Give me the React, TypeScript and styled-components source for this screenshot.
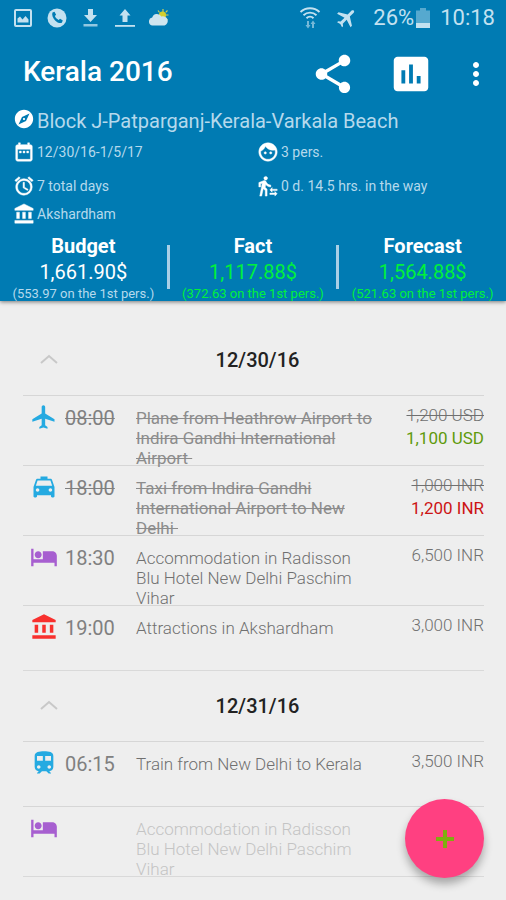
import React from 'react';
import styled, { createGlobalStyle, css } from 'styled-components';
import {
  MdAccessAlarm,
  MdAccountBalance,
  MdAssessment,
  MdDateRange,
  MdExplore,
  MdFace,
  MdFlight,
  MdHotel,
  MdLocalTaxi,
  MdMoreVert,
  MdShare,
  MdTrain,
  MdTransferWithinAStation,
} from 'react-icons/md';

const blue = '#007bb3';
const statusTint = '#c3e1f0';
const paleText = '#b5d9ec';
const green = '#00f03c';

const GlobalStyle = createGlobalStyle`
  * { box-sizing: border-box; }
  body {
    margin: 0;
    background: #eeeeee;
    font-family: Roboto, "Liberation Sans", sans-serif;
  }
  svg { display: block; flex: none; }
  h1, h2, h3, p, ul { margin: 0; padding: 0; }
`;

const Page = styled.div`
  min-height: 100vh;
  background: #eeeeee;
`;

const Header = styled.header`
  background: ${blue};
  box-shadow: 0 1px 4px rgba(0, 0, 0, 0.5);
`;

const StatusBar = styled.div`
  display: flex;
  align-items: center;
  justify-content: space-between;
  height: 36px;
  padding: 0 11px 0 13px;
  color: ${statusTint};
`;

const StatusNotices = styled.div`
  display: flex;
  align-items: center;
  gap: 14px;
`;

const StatusSystem = styled.div`
  display: flex;
  align-items: center;
  gap: 14px;
  font-size: 22px;
  line-height: 36px;
`;

const Charge = styled.span`
  display: flex;
  align-items: center;
  gap: 2px;
`;

const Battery = styled.span`
  display: flex;
  align-items: center;
  gap: 10px;
`;

const TiltedPlane = styled(MdFlight)`
  transform: rotate(45deg);
`;

const Toolbar = styled.div`
  display: flex;
  align-items: center;
  height: 72px;
  padding: 4px 12px 0 23px;
`;

const Title = styled.h1`
  flex: 1;
  color: #ffffff;
  font-size: 28px;
  font-weight: 500;
  line-height: 40px;
  padding-bottom: 4px;
`;

const ToolButton = styled.button`
  display: flex;
  padding: 0;
  border: 0;
  background: none;
  color: #ffffff;
  cursor: pointer;
`;

const Tools = styled.div`
  display: flex;
  align-items: center;
  gap: 24px;
`;

const ToolGroup = styled.div`
  display: flex;
  align-items: center;
  gap: 32px;
`;

const Details = styled.section`
  padding: 0 13px;
  color: #ffffff;
`;

const Route = styled.p`
  display: flex;
  gap: 2px;
  color: ${paleText};
  font-size: 20px;
  line-height: 26px;

  svg { color: #ffffff; }
`;

const Facts = styled.ul`
  display: grid;
  grid-template-columns: 1fr 1fr;
  grid-template-rows: 36px 32px 24px;
  column-gap: 8px;
  list-style: none;
`;

const Fact = styled.li`
  display: flex;
  align-items: center;
  gap: 2px;
  color: ${paleText};
  font-size: 14px;
  line-height: 20px;

  svg { color: #ffffff; }
  path:not([fill='none']) { stroke-width: 0.5; }
`;

const Summary = styled.section`
  display: grid;
  grid-template-columns: 1fr 3px 1fr 3px 1fr;
  padding-top: 9px;
`;

const Divider = styled.span`
  height: 44px;
  margin-top: 10px;
  background: #a9cfe6;
`;

const Total = styled.div`
  text-align: center;
  white-space: nowrap;
`;

const TotalLabel = styled.h2`
  color: #ffffff;
  font-size: 20px;
  font-weight: 700;
  line-height: 22px;
`;

const TotalValue = styled.p<{ $good?: boolean }>`
  color: ${(p) => (p.$good ? green : '#ffffff')};
  font-size: 20px;
  line-height: 30px;
`;

const TotalNote = styled.p<{ $good?: boolean }>`
  color: ${(p) => (p.$good ? green : paleText)};
  font-size: 13px;
  line-height: 14px;
`;

const Schedule = styled.main`
  padding: 24px 22px 22px 23px;
`;

const Day = styled.section`
  border-bottom: 1px solid #d9d9d9;
`;

const DayHeader = styled.div`
  display: grid;
  grid-template-columns: 52px 1fr 44px;
  align-items: center;
  height: 70px;
`;

const Collapse = styled.button`
  display: flex;
  justify-content: center;
  padding: 0;
  border: 0;
  background: none;
  color: #c8c8c8;
  cursor: pointer;
`;

const DayTitle = styled.h2`
  color: #222222;
  font-size: 20px;
  font-weight: 500;
  line-height: 24px;
  text-align: center;
`;

const Items = styled.ul`
  list-style: none;
`;

const Item = styled.li`
  display: grid;
  grid-template-columns: 42px 71px 1fr 106px;
  align-items: start;
  min-height: 65px;
  border-top: 1px solid #d6d6d6;
`;

const ItemIcon = styled.span`
  display: flex;
  justify-content: center;
  padding-top: 7px;
`;

const struck = css`
  text-decoration: line-through;
  text-decoration-thickness: 1px;
`;

const Time = styled.span<{ $done?: boolean }>`
  padding-top: 9px;
  color: #808080;
  font-size: 20px;
  line-height: 26px;
  ${(p) => p.$done && struck}
`;

/* The third line of a long description runs close to the next rule. */
const Description = styled.p<{ $done?: boolean; $faded?: boolean }>`
  padding-top: 12px;
  margin-bottom: -3px;
  color: ${(p) => (p.$faded ? '#c4c4c4' : p.$done ? '#8c8c8c' : '#707070')};
  font-size: 17px;
  font-weight: ${(p) => (p.$done ? 400 : 300)};
  line-height: 20px;
  ${(p) => p.$done && struck}
`;

const Amounts = styled.div`
  padding-top: 8px;
  font-size: 17px;
  line-height: 23px;
  text-align: right;
`;

const tones = { plain: '#707070', under: '#5f9a0c', over: '#cc1414' };

const Amount = styled.p<{ $tone?: keyof typeof tones; $done?: boolean }>`
  color: ${(p) => tones[p.$tone ?? 'plain']};
  font-weight: ${(p) => (p.$tone ? 400 : 300)};
  ${(p) => p.$done && struck}
`;

const AddButton = styled.button`
  position: fixed;
  right: 22px;
  bottom: 22px;
  display: flex;
  align-items: center;
  justify-content: center;
  width: 79px;
  height: 79px;
  padding: 0;
  border: 0;
  border-radius: 50%;
  background: #ff4081;
  box-shadow: 0 6px 8px rgba(0, 0, 0, 0.3);
  cursor: pointer;
`;

const PictureIcon = () => (
  <svg width="20" height="20" viewBox="0 0 20 20" aria-hidden="true">
    <rect x="2" y="2" width="16" height="16" rx="1" fill="none" stroke="currentColor" strokeWidth="2" />
    <path d="M4.5 14.5v-4l2.5-2 2.5 3 3-3.500 3 3.500v3z" fill="currentColor" />
  </svg>
);

const CallIcon = () => (
  <svg width="20" height="20" viewBox="0 0 20 20" aria-hidden="true">
    <circle cx="10" cy="10" r="9.500" fill="currentColor" />
    <path
      d="M5.500 4.500l2-.8 1.600 3-1.200 1.300c.7 1.700 1.700 2.900 3.700 3.900l1.500-1.200 2.700 1.900-1 2.100c-1.600 1-4.700-.2-6.700-2.300-2.200-2.200-3.600-5.700-2.600-7.900z"
      fill={blue}
    />
  </svg>
);

const DownloadIcon = () => (
  <svg width="20" height="20" viewBox="0 0 20 20" aria-hidden="true">
    <path d="M7 1h5v6h4l-6.500 7L3 7h4z" fill="currentColor" />
    <path d="M2.500 16h14v2.500h-14z" fill="currentColor" opacity=".75" />
  </svg>
);

const UploadIcon = () => (
  <svg width="20" height="20" viewBox="0 0 20 20" aria-hidden="true">
    <path d="M7.500 14V7.500H4.500L10 1l5.500 6.500h-3V14z" fill="currentColor" />
    <path d="M0 17h20v1.800H0z" fill="currentColor" />
  </svg>
);

const WeatherIcon = () => (
  <svg width="21" height="20" viewBox="0 0 21 20" aria-hidden="true">
    <path d="M14 1v3M19.500 7h-2.500M9 2.500l1.500 2M18.500 2.500l-1.800 1.800M18.500 12l-1.500-1.500" stroke="#c9cf5a" strokeWidth="1.200" />
    <circle cx="13.500" cy="7" r="3.600" fill="#d3cf2e" />
    <path d="M3.500 17.500a4 4 0 0 1-.3-7.900 5 5 0 0 1 9.200-1 4.600 4.600 0 0 1 3.200 8.900z" fill="#cfe5ef" />
  </svg>
);

const WifiIcon = () => (
  <svg width="22" height="22" viewBox="0 0 22 22" aria-hidden="true">
    <g fill="none" stroke="currentColor" strokeWidth="1.900">
      <path d="M1.500 5a14 14 0 0 1 19 0" />
      <path d="M4.500 8.200a9.500 9.500 0 0 1 13 0" />
      <path d="M7.500 11.200a5 5 0 0 1 7 0" />
    </g>
    <path d="M8 14h2v4h1.500L9 21.500 6.500 18H8z" fill="currentColor" opacity=".6" />
    <path d="M13 21h2v-4h1.500L14 13.500 11.500 17H13z" fill="currentColor" opacity=".6" />
  </svg>
);

const BatteryIcon = () => (
  <svg width="14" height="20" viewBox="0 0 14 20" aria-hidden="true">
    <path d="M4 0h6v2.500h4V15H0V2.500h4z" fill="#56a9cf" />
    <path d="M0 15h14v5H0z" fill="currentColor" />
  </svg>
);

const ChevronUp = () => (
  <svg width="18" height="12" viewBox="0 0 18 12" aria-hidden="true">
    <path d="M1 9l8-7 8 7" fill="none" stroke="currentColor" strokeWidth="2" />
  </svg>
);

const PlusIcon = () => (
  <svg width="20" height="20" viewBox="0 0 20 20" aria-hidden="true">
    <path d="M10 1v18M1 10h18" stroke="#7fae10" strokeWidth="4" />
  </svg>
);

const sky = '#25aae1';
const violet = '#a75fd0';

interface Entry {
  icon: React.ReactNode;
  time?: string;
  text: string;
  planned?: string;
  actual?: string;
  tone?: 'under' | 'over';
  done?: boolean;
  faded?: boolean;
}

const days: { date: string; entries: Entry[] }[] = [
  {
    date: '12/30/16',
    entries: [
      {
        icon: <MdFlight size={28} color={sky} />,
        time: '08:00',
        text: 'Plane from Heathrow Airport to Indira Gandhi International Airport\u00a0',
        planned: '1,200 USD',
        actual: '1,100 USD',
        tone: 'under',
        done: true,
      },
      {
        icon: <MdLocalTaxi size={28} color={sky} />,
        time: '18:00',
        text: 'Taxi from Indira Gandhi International Airport to New Delhi\u00a0',
        planned: '1,000 INR',
        actual: '1,200 INR',
        tone: 'over',
        done: true,
      },
      {
        icon: <MdHotel size={28} color={violet} />,
        time: '18:30',
        text: 'Accommodation in Radisson Blu Hotel New Delhi Paschim Vihar',
        planned: '6,500 INR',
      },
      {
        icon: <MdAccountBalance size={28} color="#f8302e" />,
        time: '19:00',
        text: 'Attractions in Akshardham',
        planned: '3,000 INR',
      },
    ],
  },
  {
    date: '12/31/16',
    entries: [
      {
        icon: <MdTrain size={28} color={sky} />,
        time: '06:15',
        text: 'Train from New Delhi to Kerala',
        planned: '3,500 INR',
      },
      {
        icon: <MdHotel size={28} color={violet} />,
        text: 'Accommodation in Radisson Blu Hotel New Delhi Paschim Vihar',
        faded: true,
      },
    ],
  },
];

const totals = [
  { label: 'Budget', value: '1,661.90$', note: '(553.97 on the 1st pers.)', good: false },
  { label: 'Fact', value: '1,117.88$', note: '(372.63 on the 1st pers.)', good: true },
  { label: 'Forecast', value: '1,564.88$', note: '(521.63 on the 1st pers.)', good: true },
];

const facts = [
  { icon: <MdDateRange size={22} />, text: '12/30/16-1/5/17' },
  { icon: <MdFace size={22} />, text: '3 pers.' },
  { icon: <MdAccessAlarm size={22} />, text: '7 total days' },
  { icon: <MdTransferWithinAStation size={22} />, text: '0 d. 14.5 hrs. in the way' },
  { icon: <MdAccountBalance size={22} />, text: 'Akshardham' },
];

export default function App() {
  return (
    <Page>
      <GlobalStyle />
      <Header>
        <StatusBar>
          <StatusNotices>
            <PictureIcon />
            <CallIcon />
            <DownloadIcon />
            <UploadIcon />
            <WeatherIcon />
          </StatusNotices>
          <StatusSystem>
            <WifiIcon />
            <TiltedPlane size={24} />
            <Battery>
              <Charge>
                26%
                <BatteryIcon />
              </Charge>
              <span>10:18</span>
            </Battery>
          </StatusSystem>
        </StatusBar>
        <Toolbar>
          <Title>Kerala 2016</Title>
          <Tools>
            <ToolGroup>
              <ToolButton aria-label="Share">
                <MdShare size={46} />
              </ToolButton>
              <ToolButton aria-label="Statistics">
                <MdAssessment size={46} />
              </ToolButton>
            </ToolGroup>
            <ToolButton aria-label="More options">
              <MdMoreVert size={36} />
            </ToolButton>
          </Tools>
        </Toolbar>
        <Details>
          <Route>
            <MdExplore size={22} />
            Block J-Patparganj-Kerala-Varkala Beach
          </Route>
          <Facts>
            {facts.map((f) => (
              <Fact key={f.text}>
                {f.icon}
                {f.text}
              </Fact>
            ))}
          </Facts>
        </Details>
        <Summary>
          {totals.map((t, i) => (
            <React.Fragment key={t.label}>
              {i > 0 && <Divider />}
              <Total>
                <TotalLabel>{t.label}</TotalLabel>
                <TotalValue $good={t.good}>{t.value}</TotalValue>
                <TotalNote $good={t.good}>{t.note}</TotalNote>
              </Total>
            </React.Fragment>
          ))}
        </Summary>
      </Header>
      <Schedule>
        {days.map((day) => (
          <Day key={day.date}>
            <DayHeader>
              <Collapse aria-label={`Collapse ${day.date}`}>
                <ChevronUp />
              </Collapse>
              <DayTitle>{day.date}</DayTitle>
            </DayHeader>
            <Items>
              {day.entries.map((e) => (
                <Item key={e.text}>
                  <ItemIcon>{e.icon}</ItemIcon>
                  <Time $done={e.done}>{e.time}</Time>
                  <Description $done={e.done} $faded={e.faded}>
                    {e.text}
                  </Description>
                  <Amounts>
                    {e.planned && <Amount $done={e.done}>{e.planned}</Amount>}
                    {e.actual && <Amount $tone={e.tone}>{e.actual}</Amount>}
                  </Amounts>
                </Item>
              ))}
            </Items>
          </Day>
        ))}
      </Schedule>
      <AddButton aria-label="Add">
        <PlusIcon />
      </AddButton>
    </Page>
  );
}
